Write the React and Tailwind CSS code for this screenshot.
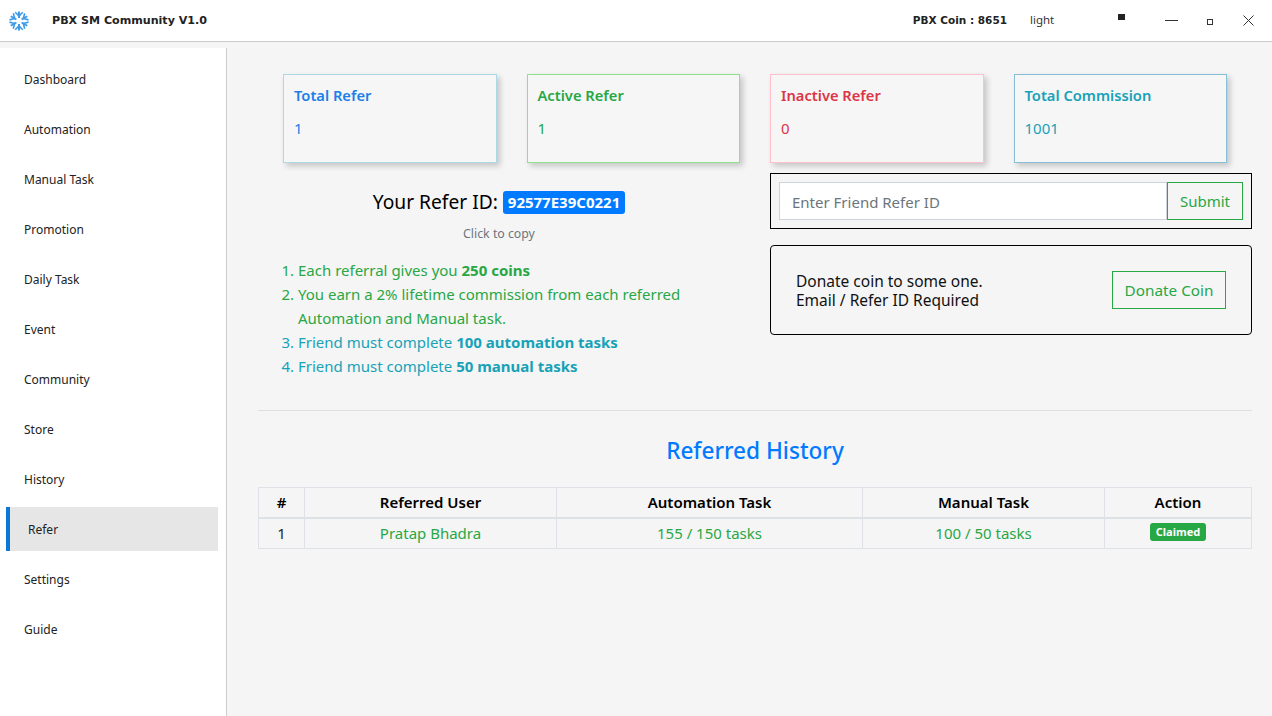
import { useState } from "react";

const menu = ["Dashboard", "Automation", "Manual Task", "Promotion", "Daily Task", "Event", "Community", "Store", "History", "Refer", "Settings", "Guide"];

function Logo() {
    const spokes = [0, 60, 120, 180, 240, 300];
    return (
        <svg width="20" height="20" viewBox="0 0 20 20" fill="none" stroke="#3d9be9" strokeWidth="2">
            {spokes.map((a) => (
                <g key={a} transform={`rotate(${a} 10 10)`}>
                    <path d="M10 7V0.5" />
                    <path d="M6.2 1.2L10 5L13.8 1.2" strokeWidth="1.6" />
                </g>
            ))}
        </svg>
    );
}

function StatCard({ title, value, border, color }) {
    return (
        <div className={`h-[89px] border ${border} bg-[#f6f6f6] px-[10px] pt-[9px] shadow-[3px_3px_6px_rgba(0,0,0,0.2)]`}>
            <div className={`text-[14.7px] leading-[22px] font-semibold ${color}`}>{title}</div>
            <div className={`mt-[11px] text-[15px] leading-[22px] ${color}`}>{value}</div>
        </div>
    );
}

export default function App() {
    const [friendId, setFriendId] = useState("");

    return (
        <div className="flex h-[716px] w-[1272px] flex-col overflow-hidden bg-[#f5f5f5] font-['Noto_Sans','Open_Sans',sans-serif] text-black">
            {/* title bar */}
            <div className="flex h-[42px] shrink-0 items-center border-b border-[#cccccc] bg-white">
                <div className="ml-[9px] flex w-[20px] justify-center"><Logo /></div>
                <div className="mt-[1px] ml-[23px] font-['DejaVu_Sans',sans-serif] text-[11.1px] font-bold text-[#222222]">PBX SM Community V1.0</div>
                <div className="ml-auto font-['DejaVu_Sans',sans-serif] text-[10.5px] font-bold text-[#222222]">PBX Coin : 8651</div>
                <div className="mb-[1px] ml-[23px] w-[88px] text-[11.5px] text-[#333333]">light</div>
                <div className="mb-[8px] h-[6px] w-[7px] bg-[#222222]" />
                <div className="ml-[40px] h-px w-[13px] bg-[#333333]" />
                <div className="mt-[3px] ml-[29px] h-[6px] w-[6px] border border-[#333333]" />
                <svg className="mr-[18px] ml-[30px]" width="11" height="11" viewBox="0 0 11 11" stroke="#333333" strokeWidth="1">
                    <path d="M0.5 0.5L10.5 10.5M10.5 0.5L0.5 10.5" />
                </svg>
            </div>

            <div className="flex min-h-0 flex-1 pt-[6px]">
                {/* sidebar */}
                <aside className="flex w-[227px] shrink-0 flex-col gap-[6px] border-r border-[#cccccc] bg-white pt-[9px] pr-[8px] pl-[6px]">
                    {menu.map((item) =>
                        item === "Refer" ? (
                            <div key={item} className="flex h-[44px] items-center border-l-4 border-[#0a78d4] bg-[#e6e6e6] pt-[2px] pl-[18px] text-[12px] text-[#222222]">
                                {item}
                            </div>
                        ) : (
                            <div key={item} className="flex h-[44px] items-center pt-[2px] pl-[18px] text-[12px] text-[#222222]">
                                {item}
                            </div>
                        )
                    )}
                </aside>

                {/* main */}
                <main className="min-w-0 flex-1 pt-[26px] pr-[20px] pl-[31px]">
                    <div className="grid grid-cols-4 gap-[30px] px-[25px]">
                        <StatCard title="Total Refer" value="1" border="border-[#add8e6]" color="text-[#1a7fe8]" />
                        <StatCard title="Active Refer" value="1" border="border-[#90e090]" color="text-[#28a745]" />
                        <StatCard title="Inactive Refer" value="0" border="border-[#ffc0cb]" color="text-[#dc3545]" />
                        <StatCard title="Total Commission" value="1001" border="border-[#87bfd8]" color="text-[#17a2b8]" />
                    </div>

                    <div className="mt-[10px] grid grid-cols-2 gap-[30px]">
                        <div>
                            <div className="mt-[17px] flex items-center justify-center gap-[5px]">
                                <span className="text-[19.2px] leading-[24px]">Your Refer ID:</span>
                                <span className="rounded-[3px] bg-[#007bff] px-[5px] text-[15px] leading-[23px] font-bold text-white">92577E39C0221</span>
                            </div>
                            <div className="mt-[11px] text-center text-[12.3px] leading-[18px] text-[#6c757d]">Click to copy</div>
                            <ol className="mt-[15px] ml-[40px] list-decimal text-[15px] leading-[24px]">
                                <li className="text-[#28a745]">Each referral gives you <b>250 coins</b></li>
                                <li className="text-[#28a745]">You earn a 2% lifetime commission from each referred Automation and Manual task.</li>
                                <li className="text-[#17a2b8]">Friend must complete <b>100 automation tasks</b></li>
                                <li className="text-[#17a2b8]">Friend must complete <b>50 manual tasks</b></li>
                            </ol>
                        </div>

                        <div>
                            <div className="flex h-[56px] items-center border border-black px-[8px]">
                                <input
                                    value={friendId}
                                    onChange={(e) => setFriendId(e.target.value)}
                                    placeholder="Enter Friend Refer ID"
                                    className="h-[38px] min-w-0 flex-1 border border-[#ced4da] bg-white px-[12px] pt-[2px] text-[15px] text-[#495057] outline-none placeholder:text-[#6c757d]"
                                />
                                <button className="h-[38px] w-[76px] border border-[#28a745] text-[15px] text-[#28a745]">Submit</button>
                            </div>
                            <div className="mt-[16px] flex h-[90px] items-center justify-between rounded-[4px] border border-black px-[25px]">
                                <div className="pt-[2px] text-[15.5px] leading-[19px] text-[#111111]">
                                    Donate coin to some one.
                                    <br />
                                    Email / Refer ID Required
                                </div>
                                <button className="h-[38px] w-[114px] border border-[#28a745] text-[15.3px] text-[#28a745]">Donate Coin</button>
                            </div>
                        </div>
                    </div>

                    <hr className="mt-[32px] border-[#dfdfdf]" />

                    <h2 className="mt-[23px] text-center text-[22.6px] leading-[34px] font-medium text-[#007bff]">Referred History</h2>

                    <table className="mt-[19px] w-full table-fixed border-collapse text-center text-[15px]">
                        <thead>
                            <tr className="h-[30px] border-b-2 border-[#dee2e6]">
                                <th className="w-[46px] border border-[#dee2e6] font-semibold">#</th>
                                <th className="w-[252px] border border-[#dee2e6] font-semibold">Referred User</th>
                                <th className="w-[306px] border border-[#dee2e6] font-semibold">Automation Task</th>
                                <th className="w-[242px] border border-[#dee2e6] font-semibold">Manual Task</th>
                                <th className="border border-[#dee2e6] font-semibold">Action</th>
                            </tr>
                        </thead>
                        <tbody>
                            <tr className="h-[31px] text-[#28a745]">
                                <td className="border border-[#dee2e6] text-[#212529]">1</td>
                                <td className="border border-[#dee2e6]">Pratap Bhadra</td>
                                <td className="border border-[#dee2e6]">155 / 150 tasks</td>
                                <td className="border border-[#dee2e6]">100 / 50 tasks</td>
                                <td className="border border-[#dee2e6] align-top">
                                    <span className="mt-[4px] inline-block h-[18px] w-[56px] rounded-[3px] bg-[#28a745] text-[11px] leading-[18px] font-bold text-white">Claimed</span>
                                </td>
                            </tr>
                        </tbody>
                    </table>
                </main>
            </div>
        </div>
    );
}
